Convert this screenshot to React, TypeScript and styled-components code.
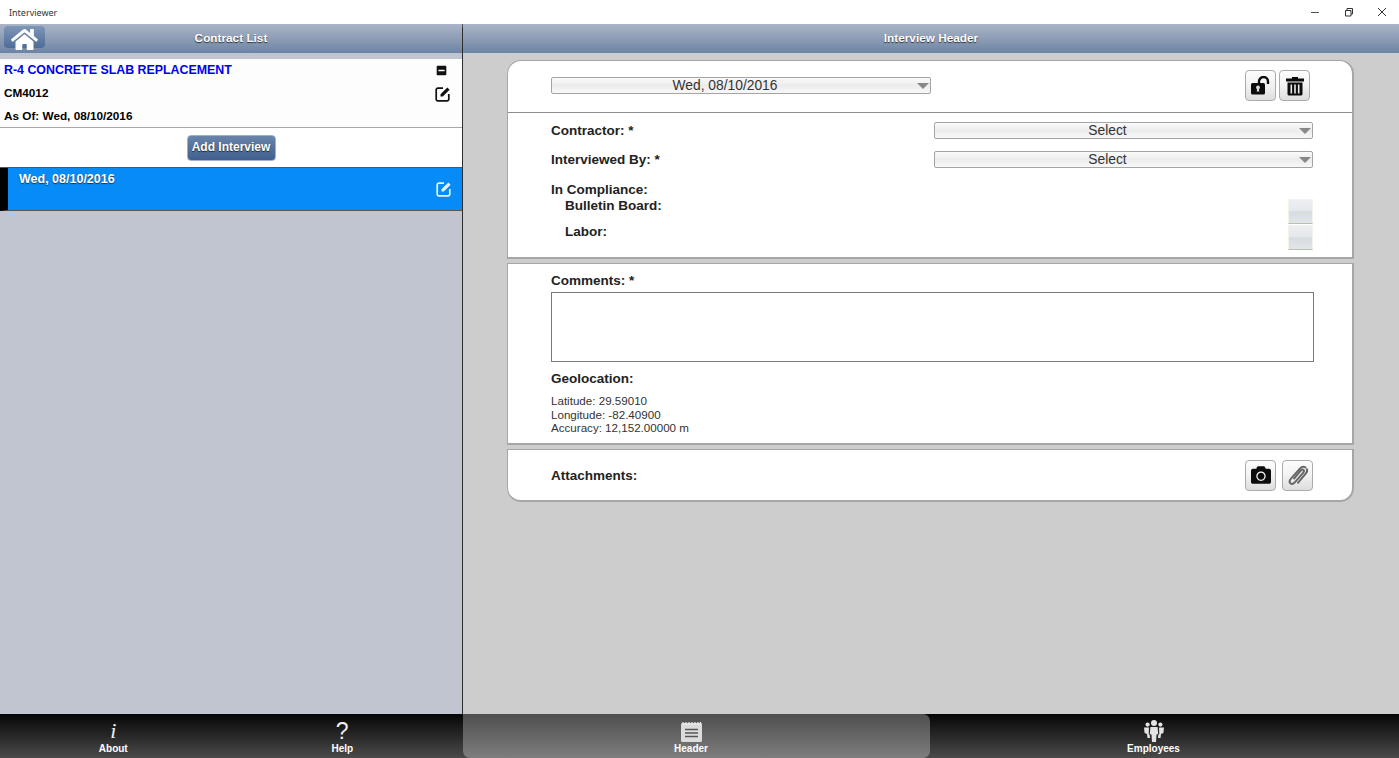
import styled, { createGlobalStyle } from "styled-components";
import { FaCamera, FaHome, FaMinusSquare } from "react-icons/fa";

const GlobalStyle = createGlobalStyle`
  html, body { margin: 0; padding: 0; height: 100%; overflow: hidden; background: #fff; }
  #root { height: 100%; }
  * { box-sizing: border-box; }
`;

const Shell = styled.div`
  display: flex;
  flex-direction: column;
  height: 758px;
  width: 1399px;
  font-family: "Liberation Sans", Arial, sans-serif;
`;

const TitleBar = styled.div`
  height: 24px;
  flex: none;
  display: flex;
  align-items: center;
  justify-content: space-between;
  background: #fff;
  padding-left: 9px;
`;

const AppName = styled.span`
  font-family: "Noto Sans", sans-serif;
  font-size: 9px;
  color: #333;
`;

const WindowButtons = styled.div`
  display: flex;
`;

const WindowButton = styled.span`
  width: 33.5px;
  height: 24px;
  display: grid;
  place-items: center;
  color: #333;
`;

const Main = styled.div`
  flex: 1;
  display: flex;
  min-height: 0;
`;

const LeftPane = styled.div`
  width: 463px;
  flex: none;
  display: flex;
  flex-direction: column;
  background: #c0c5d0;
  border-right: 1px solid #2e2e2e;
  position: relative;
`;

const PaneNotch = styled.span`
  position: absolute;
  top: 0;
  right: -4px;
  width: 0;
  height: 0;
  border-left: 3px solid transparent;
  border-right: 3px solid transparent;
  border-top: 4px solid #555;
`;

const RightPane = styled.div`
  flex: 1;
  display: flex;
  flex-direction: column;
  background: #cdcdcd;
`;

const HeaderBar = styled.div`
  height: 29px;
  flex: none;
  display: flex;
  align-items: center;
  justify-content: center;
  position: relative;
  background: linear-gradient(180deg, #a9b5c8 0%, #8e9db5 50%, #6b84a4 100%);
  color: #fff;
  font-size: 11.8px;
  font-weight: bold;
  text-shadow: 0 1px 1px #333;
  padding-bottom: 2px;
`;

const HomeButton = styled.button`
  position: absolute;
  left: 4px;
  top: 2px;
  width: 41px;
  height: 22px;
  padding: 0;
  border: none;
  border-radius: 4px;
  background: linear-gradient(180deg, #8097b6 0%, #4c6c98 100%);
  color: #fff;
  display: grid;
  place-items: center;
`;

const ContractCard = styled.div`
  margin-top: 6px;
  height: 69px;
  flex: none;
  background: #fdfdfd;
  border-bottom: 1px solid #a8a8a8;
  padding: 0 11px 0 4px;
  display: grid;
  grid-template-columns: 1fr auto;
  grid-auto-rows: 22.5px;
  align-items: center;
  font-size: 11.75px;
  font-weight: bold;
  color: #000;
`;

const ContractTitle = styled.span`
  color: #0000f0;
  font-size: 12.4px;
`;

const MinusIcon = styled.span`
  display: flex;
  justify-content: flex-end;
  padding-right: 4px;
  color: #111;
`;

const EditIcon = styled.span`
  display: flex;
  justify-content: flex-end;
  margin-top: 3px;
  color: #111;
`;

const AddRow = styled.div`
  height: 40px;
  flex: none;
  background: #fff;
  border-bottom: 1px solid #555;
  display: flex;
  align-items: center;
  justify-content: center;
`;

const AddButton = styled.button`
  width: 89px;
  height: 26px;
  padding: 0 0 1px;
  border: 1px solid #9fb0c8;
  border-radius: 4px;
  background: linear-gradient(180deg, #6a83a8 0%, #3f6090 100%);
  color: #fff;
  font-family: inherit;
  font-size: 12px;
  font-weight: bold;
  text-shadow: 0 1px 1px #222;
`;

const InterviewRow = styled.div`
  height: 43px;
  flex: none;
  display: flex;
  justify-content: space-between;
  background: #068bf7;
  border-left: 8px solid #000;
  border-bottom: 1px solid #555;
  padding: 4px 10px 0 11px;
  color: #fff;
  font-size: 12.5px;
  font-weight: bold;
  text-shadow: 0 1px 1px #234;
`;

const InterviewEdit = styled.span`
  padding-top: 9px;
  color: #e8f4ff;
`;

const Content = styled.div`
  flex: 1;
  padding: 7px 45px 0 44px;
  display: flex;
  flex-direction: column;
  gap: 4px;
`;

const Card = styled.section<{ $radius: string }>`
  background: #fff;
  border: 1px solid #a6a6a6;
  border-bottom: 2px solid #a6a6a6;
  border-right-width: 2px;
  border-radius: ${(p) => p.$radius};
`;

const DateRow = styled.div`
  height: 52px;
  display: flex;
  align-items: center;
  justify-content: space-between;
  padding: 0 42px 2px 43px;
  border-bottom: 1px solid #8e8e8e;
`;

const Select = styled.div<{ $width: number }>`
  width: ${(p) => p.$width}px;
  height: 17px;
  position: relative;
  display: flex;
  align-items: center;
  justify-content: center;
  padding-right: 32px;
  border: 1px solid #a4a4a4;
  border-radius: 2px;
  background: linear-gradient(180deg, #fbfbfb 0%, #ececec 50%, #f8f8f8 100%);
  color: #333;
  font-size: 13.8px;
  &::after {
    content: "";
    position: absolute;
    right: 1px;
    top: 5px;
    border-left: 6px solid transparent;
    border-right: 6px solid transparent;
    border-top: 6px solid #888;
  }
`;

const IconButtons = styled.div<{ $gap: number }>`
  display: flex;
  gap: ${(p) => p.$gap}px;
`;

const IconButton = styled.button`
  width: 31px;
  height: 31px;
  padding: 0;
  display: grid;
  place-items: center;
  border: 1px solid #ababab;
  border-radius: 4px;
  background: linear-gradient(180deg, #fdfdfd 0%, #f2f2f2 50%, #dddddd 100%);
  color: #0c0c0c;
`;

const Form = styled.div`
  padding: 8px 39px 9px 43px;
  display: flex;
  flex-direction: column;
`;

const FieldRow = styled.div`
  height: 28.5px;
  display: flex;
  align-items: flex-start;
  justify-content: space-between;
  padding-top: 1px;
`;

const Label = styled.div<{ $indent?: number }>`
  font-size: 13.5px;
  font-weight: bold;
  line-height: 18px;
  color: #222;
  padding-left: ${(p) => p.$indent ?? 0}px;
`;

const ComplianceHead = styled(Label)`
  margin: 3px 0 -2px;
`;

const AttachLabel = styled(Label)`
  margin-top: 1px;
`;

const CheckRow = styled.div`
  height: 25.5px;
  display: flex;
  align-items: flex-start;
  justify-content: space-between;
`;

const CheckBox = styled.span`
  width: 25px;
  height: 25px;
  margin-top: 2px;
  border: 1px solid #f1f4ea;
  border-bottom-color: #b6c2ac;
  background: linear-gradient(180deg, #eceef0 0%, #e6e9ec 45%, #d6dce0 52%, #e2e6e9 100%);
`;

const CommentsCard = styled.div`
  padding: 8px 38px 0 43px;
  display: flex;
  flex-direction: column;
  height: 179px;
`;

const CommentBox = styled.div`
  height: 70px;
  margin-top: 2px;
  margin-bottom: 8px;
  border: 1px solid #7a7a7a;
  background: #fff;
`;

const GeoLines = styled.div`
  margin-top: 6px;
  font-size: 11.6px;
  line-height: 13.5px;
  color: #333;
`;

const AttachRow = styled.div`
  height: 50px;
  display: flex;
  align-items: center;
  justify-content: space-between;
  padding: 0 39px 0 43px;
`;

const TabBar = styled.nav`
  height: 44px;
  flex: none;
  display: grid;
  grid-template-columns: 231.5px 231.5px 467px 469px;
  background: linear-gradient(180deg, #060606 0%, #4a4a4a 100%);
`;

const Tab = styled.div<{ $active?: boolean; $shift: number }>`
  display: flex;
  flex-direction: column;
  align-items: center;
  justify-content: flex-end;
  padding: 0 ${(p) => p.$shift}px 3px 0;
  color: #fff;
  font-size: 10px;
  font-weight: bold;
  line-height: 13px;
  border-radius: ${(p) => (p.$active ? "0 7px 7px 7px" : "0")};
  background: ${(p) =>
    p.$active ? "linear-gradient(180deg, #4e4e4e 0%, #7e7e7e 100%)" : "transparent"};
`;

const TabGlyph = styled.span`
  height: 24px;
  display: flex;
  align-items: flex-end;
  justify-content: center;
  color: #eee;
  font-weight: normal;
`;

const InfoGlyph = styled(TabGlyph)`
  font-family: "Liberation Serif", serif;
  font-style: italic;
  font-size: 22px;
  line-height: 22px;
`;

const HelpGlyph = styled(TabGlyph)`
  font-size: 23px;
  line-height: 22px;
`;

const EditSquare = () => (
  <svg width="16" height="16" viewBox="0 0 16 16" fill="none" stroke="currentColor">
    <path d="M8 2.2H3A1.700 1.700 0 0 0 1.200 4v9A1.700 1.700 0 0 0 3 14.800h9a1.700 1.700 0 0 0 1.800-1.800V8" strokeWidth="1.700" />
    <path d="M5.500 8.200 12.300 1.400l2.300 2.300-6.800 6.800H5.500z" fill="currentColor" stroke="none" />
  </svg>
);

const OpenLock = () => (
  <svg width="21" height="19" viewBox="0 0 21 19">
    <path d="M9 8V5.500a4.500 4.500 0 0 1 9 0V8" fill="none" stroke="#0c0c0c" strokeWidth="2.400" />
    <rect x="1" y="7" width="14" height="11.500" rx="1.500" fill="#0c0c0c" />
    <circle cx="8" cy="11.500" r="1.900" fill="#ddd" />
    <path d="M7.200 12h1.600l.5 3.500H6.700z" fill="#ddd" />
  </svg>
);

const Bin = () => (
  <svg width="20" height="20" viewBox="0 0 20 20" fill="#0c0c0c">
    <path d="M7 2.500V1h6v1.500h6v3H1v-3z" />
    <path d="M2.500 6.500h15V18a1.500 1.500 0 0 1-1.500 1.500H4A1.500 1.500 0 0 1 2.500 18z" />
    <path d="M5.500 8.500h1.600v9H5.500zM9.200 8.500h1.600v9H9.200zM12.900 8.500h1.600v9h-1.600z" fill="#e8e8e8" />
  </svg>
);

const Clip = () => (
  <svg width="24" height="24" viewBox="0 0 24 24" fill="none" stroke="#666" strokeWidth="2">
    <path d="M20 5c-1.700-2-4-1.700-5.700.2L5 15.600c-1.600 1.900-1.900 3.600-.6 4.700 1.300 1.100 3 .6 4.600-1.200l8.100-9.300c1-1.200 1.100-2.200.4-2.900-.8-.6-1.700-.3-2.700.8l-7.200 8.400" />
    <path d="M20.500 5.500c1.100 1.500.5 3.500-.6 4.800l-8.400 10" />
  </svg>
);

const Notepad = () => (
  <svg width="23" height="21" viewBox="0 0 23 21">
    <rect x="1" y="2" width="21" height="19" rx="1.500" fill="#dcdcdc" />
    <path d="M3 1v3M6 1v3M9 1v3M12 1v3M15 1v3M18 1v3M20.500 1v3" stroke="#eee" strokeWidth="1.200" />
    <path d="M5 8.500h13M5 12h13M5 15.500h13" stroke="#555" strokeWidth="1.500" />
  </svg>
);

const People = () => (
  <svg width="20" height="22" viewBox="0 0 20 22" fill="#e4e4e4">
    <circle cx="10" cy="3" r="3" />
    <circle cx="3.600" cy="4.600" r="2.100" />
    <circle cx="16.400" cy="4.600" r="2.100" />
    <path d="M6.400 7h7.200l.6 7-1.700.6-.5 7.400H8l-.5-7.400-1.700-.6z" />
    <path d="M0 7.600h5L4.700 14l1 .8.3 3.200H3.500L3 14 .6 13z" />
    <path d="M20 7.600h-5l.3 6.400-1 .8-.3 3.200h2.500l.5-4 2.400-1z" />
  </svg>
);

export default function App() {
  return (
    <>
      <GlobalStyle />
      <Shell>
        <TitleBar>
          <AppName>Interviewer</AppName>
          <WindowButtons>
            <WindowButton>
              <svg width="10" height="10" viewBox="0 0 10 10" stroke="#555" fill="none">
                <path d="M1 5.500h8" />
              </svg>
            </WindowButton>
            <WindowButton>
              <svg width="10" height="10" viewBox="0 0 10 10" stroke="#333" fill="none">
                <path d="M1.500 3.500h5.500v5.500h-5.500z" />
                <path d="M3 3.500v-2h5.500v5.500h-1.500" />
              </svg>
            </WindowButton>
            <WindowButton>
              <svg width="10" height="10" viewBox="0 0 10 10" stroke="#333" fill="none">
                <path d="M1 1l8 8M9 1l-8 8" />
              </svg>
            </WindowButton>
          </WindowButtons>
        </TitleBar>

        <Main>
          <LeftPane>
            <PaneNotch />
            <HeaderBar>
              <HomeButton aria-label="Home">
                <FaHome size={27} />
              </HomeButton>
              Contract List
            </HeaderBar>
            <ContractCard>
              <ContractTitle>R-4 CONCRETE SLAB REPLACEMENT</ContractTitle>
              <MinusIcon>
                <FaMinusSquare size={11} />
              </MinusIcon>
              <span>CM4012</span>
              <EditIcon>
                <EditSquare />
              </EditIcon>
              <span>As Of: Wed, 08/10/2016</span>
            </ContractCard>
            <AddRow>
              <AddButton>Add Interview</AddButton>
            </AddRow>
            <InterviewRow>
              <span>Wed, 08/10/2016</span>
              <InterviewEdit>
                <EditSquare />
              </InterviewEdit>
            </InterviewRow>
          </LeftPane>

          <RightPane>
            <HeaderBar>Interview Header</HeaderBar>
            <Content>
              <Card $radius="14px 14px 0 0">
                <DateRow>
                  <Select $width={380}>Wed, 08/10/2016</Select>
                  <IconButtons $gap={3}>
                    <IconButton aria-label="Unlock">
                      <OpenLock />
                    </IconButton>
                    <IconButton aria-label="Delete">
                      <Bin />
                    </IconButton>
                  </IconButtons>
                </DateRow>
                <Form>
                  <FieldRow>
                    <Label>Contractor: *</Label>
                    <Select $width={379}>Select</Select>
                  </FieldRow>
                  <FieldRow>
                    <Label>Interviewed By: *</Label>
                    <Select $width={379}>Select</Select>
                  </FieldRow>
                  <ComplianceHead>In Compliance:</ComplianceHead>
                  <CheckRow>
                    <Label $indent={14}>Bulletin Board:</Label>
                    <CheckBox />
                  </CheckRow>
                  <CheckRow>
                    <Label $indent={14}>Labor:</Label>
                    <CheckBox />
                  </CheckRow>
                </Form>
              </Card>

              <Card $radius="0">
                <CommentsCard>
                  <Label>Comments: *</Label>
                  <CommentBox />
                  <Label>Geolocation:</Label>
                  <GeoLines>
                    <div>Latitude: 29.59010</div>
                    <div>Longitude: -82.40900</div>
                    <div>Accuracy: 12,152.00000 m</div>
                  </GeoLines>
                </CommentsCard>
              </Card>

              <Card $radius="0 0 14px 14px">
                <AttachRow>
                  <AttachLabel>Attachments:</AttachLabel>
                  <IconButtons $gap={6}>
                    <IconButton aria-label="Camera">
                      <FaCamera size={20} />
                    </IconButton>
                    <IconButton aria-label="Attach">
                      <Clip />
                    </IconButton>
                  </IconButtons>
                </AttachRow>
              </Card>
            </Content>
          </RightPane>
        </Main>

        <TabBar>
          <Tab $shift={5}>
            <InfoGlyph>i</InfoGlyph>
            About
          </Tab>
          <Tab $shift={10}>
            <HelpGlyph>?</HelpGlyph>
            Help
          </Tab>
          <Tab $active $shift={11}>
            <TabGlyph>
              <Notepad />
            </TabGlyph>
            Header
          </Tab>
          <Tab $shift={22}>
            <TabGlyph>
              <People />
            </TabGlyph>
            Employees
          </Tab>
        </TabBar>
      </Shell>
    </>
  );
}
